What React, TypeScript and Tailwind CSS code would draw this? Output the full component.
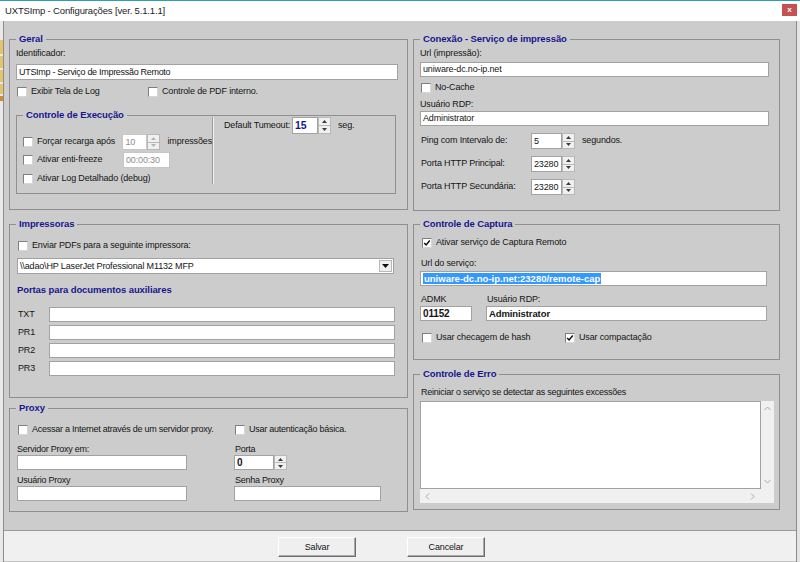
import React from 'react';

// Caixa de seleção no estilo clássico do Windows
const Box = ({ checked = false }: { checked?: boolean }) => (
  <span className="w-[10px] h-[10px] shrink-0 bg-white border border-t-[#7f7f7f] border-l-[#7f7f7f] border-r-[#d6d6d6] border-b-[#d6d6d6] flex items-center justify-center">
    {checked && (
      <svg width="8" height="8" viewBox="0 0 8 8">
        <path d="M1.2 4 L3.1 6 L6.8 1.6" stroke="#111" strokeWidth="1.5" fill="none" />
      </svg>
    )}
  </span>
);

const Check = ({ label, checked, className = '' }: { label: string; checked?: boolean; className?: string }) => (
  <div className={`flex items-center h-[13px] ${className}`}>
    <Box checked={checked} />
    <span className="ml-[4px] whitespace-nowrap leading-none">{label}</span>
  </div>
);

const Field = ({
  value = '',
  className = '',
  textClass = '',
  border = 'border-[#a2a2a2]',
}: {
  value?: React.ReactNode;
  className?: string;
  textClass?: string;
  border?: string;
}) => (
  <div className={`bg-white border ${border} flex items-center pl-[2px] overflow-hidden whitespace-nowrap leading-none shrink-0 ${className}`}>
    <span className={textClass}>{value}</span>
  </div>
);

const Tri = ({ up = false, color }: { up?: boolean; color: string }) => (
  <svg width="5" height="3" viewBox="0 0 5 3">
    <path d={up ? 'M0 3 L2.5 0 L5 3 Z' : 'M0 0 L5 0 L2.5 3 Z'} fill={color} />
  </svg>
);

const Spin = ({
  value,
  inputClass,
  textClass = '',
  className = '',
  disabled = false,
}: {
  value: string;
  inputClass: string;
  textClass?: string;
  className?: string;
  disabled?: boolean;
}) => (
  <div className={`flex shrink-0 ${className}`}>
    <Field
      value={value}
      className={`h-full ${inputClass}`}
      textClass={textClass}
      border={disabled ? 'border-[#c6c6c6]' : 'border-[#a2a2a2]'}
    />
    <div className="w-[13px] h-full flex flex-col">
      <div className="flex-1 bg-[#f0f0f0] border border-[#b8b8b8] flex items-center justify-center">
        <Tri up color={disabled ? '#b4b4b4' : '#3a3a3a'} />
      </div>
      <div className="flex-1 bg-[#f0f0f0] border border-t-0 border-[#b8b8b8] flex items-center justify-center">
        <Tri color={disabled ? '#b4b4b4' : '#3a3a3a'} />
      </div>
    </div>
  </div>
);

const Group = ({ title, className = '', children }: { title: string; className?: string; children?: React.ReactNode }) => (
  <fieldset className={`border border-[#8f8f8f] px-[6px] min-w-0 flex flex-col shrink-0 ${className}`}>
    <legend className="px-[3px] text-[9.5px] font-bold leading-[12px] text-[#16168e] tracking-[-0.1px]">{title}</legend>
    {children}
  </fieldset>
);

const Label = ({ children, className = '' }: { children: React.ReactNode; className?: string }) => (
  <div className={`h-[12px] leading-[12px] whitespace-nowrap ${className}`}>{children}</div>
);

const SpinRow = ({ label, value, suffix, className = '' }: { label: string; value: string; suffix?: string; className?: string }) => (
  <div className={`flex items-center h-[16px] ${className}`}>
    <span className="ml-[1px] w-[110px] whitespace-nowrap">{label}</span>
    <Spin value={value} inputClass="w-[31px]" className="h-[16px]" />
    {suffix && <span className="ml-[7px]">{suffix}</span>}
  </div>
);

const Chevron = ({ d }: { d: string }) => (
  <svg width="7" height="7" viewBox="0 0 7 7">
    <path d={d} stroke="#a9a9a9" strokeWidth="1" fill="none" />
  </svg>
);

const Btn = ({ children }: { children: React.ReactNode }) => (
  <button className="w-[78px] h-[20px] bg-[#efefef] border border-t-white border-l-white border-r-[#6d6d6d] border-b-[#6d6d6d] shadow-[inset_-1px_-1px_0_#a9a9a9] flex items-center justify-center leading-none">
    {children}
  </button>
);

export default function App() {
  return (
    <div className="w-[800px] h-[562px] bg-white flex flex-col overflow-hidden font-['Liberation_Sans',Arial,sans-serif] text-[9px] text-[#151515] tracking-[-0.15px]">
      {/* Barra de título */}
      <div className="h-[21px] shrink-0 border-t border-[#2e9fae] bg-white flex items-center justify-between pl-[5px] pr-[3px]">
        <span className="text-[9.5px] tracking-[-0.15px] text-[#222]">UXTSImp - Configurações [ver. 5.1.1.1]</span>
        <div className="w-[15px] h-[12px] -mt-[2px] bg-[#c75050] flex items-center justify-center text-white text-[8px] font-bold leading-none">x</div>
      </div>

      <div className="flex flex-1">
        {/* janela de fundo */}
        <div className="w-[3px] bg-[#e9e9e9] flex flex-col pt-[19px] gap-[2px]">
          <div className="h-[14px] bg-[#e6c46c]" />
          <div className="h-[12px] bg-[#e6c46c]" />
          <div className="h-[12px] bg-[#e6c46c]" />
          <div className="h-[10px] bg-[#e6c46c]" />
          <div className="h-[5px] bg-[#d08a3c]" />
        </div>

        <div className="flex-1 flex flex-col border-l border-r border-[#8c8c8c]">
          <div className="h-[510px] bg-[#cccccc] border-b border-[#9a9a9a] flex gap-[5px] pl-[5px] pt-[12px]">
            {/* Coluna esquerda */}
            <div className="w-[399px] flex flex-col">
              <Group title="Geral" className="h-[177px]">
                <Label className="mt-[2px]">Identificador:</Label>
                <Field value="UTSImp - Serviço de Impressão Remoto" className="mt-[5px] h-[16px] w-[382px]" textClass="tracking-[-0.3px]" />
                <div className="mt-[5px] flex">
                  <Check label="Exibir Tela de Log" className="ml-[1px] w-[131px]" />
                  <Check label="Controle de PDF interno." />
                </div>
                <Group title="Controle de Execução" className="mt-[11px] h-[85px] w-[380px]">
                  <div className="flex flex-1">
                    <div className="w-[189px] shrink-0 flex flex-col">
                      <div className="mt-[13px] flex items-center h-[16px]">
                        <Box />
                        <span className="ml-[4px] w-[86px] whitespace-nowrap">Forçar recarga após</span>
                        <Spin value="10" inputClass="w-[25px] bg-[#fafafa]" textClass="text-[#8d8d8d]" className="h-[16px]" disabled />
                        <span className="ml-[7px] whitespace-nowrap">impressões</span>
                      </div>
                      <div className="mt-[2px] flex items-center h-[16px]">
                        <Box />
                        <span className="ml-[4px] w-[86px] whitespace-nowrap">Ativar enti-freeze</span>
                        <Field value="00:00:30" className="w-[47px] h-[16px]" textClass="text-[#8d8d8d]" border="border-[#c6c6c6]" />
                      </div>
                      <div className="mt-[3px] flex items-center h-[16px]">
                        <Box />
                        <span className="ml-[4px] whitespace-nowrap">Ativar Log Detalhado (debug)</span>
                      </div>
                    </div>
                    <div className="w-px bg-[#9a9a9a] -mt-[4px] mb-[3px]" />
                    <div className="w-px bg-[#f2f2f2] -mt-[4px] mb-[3px]" />
                    <div className="flex flex-col pl-[10px]">
                      <div className="-mt-[4px] flex items-center h-[17px]">
                        <span className="w-[68px] whitespace-nowrap">Default Tumeout:</span>
                        <Spin value="15" inputClass="w-[26px]" textClass="font-bold text-[10.5px] text-[#16168e]" className="h-[17px]" />
                        <span className="ml-[7px]">seg.</span>
                      </div>
                    </div>
                  </div>
                </Group>
              </Group>

              <Group title="Impressoras" className="mt-[8px] h-[180px]">
                <Check label="Enviar PDFs para a seguinte impressora:" className="mt-[9px] ml-[2px]" />
                <div className="mt-[6px] ml-[1px] w-[377px] h-[16px] bg-white border border-[#a2a2a2] flex items-center justify-between">
                  <span className="pl-[2px] whitespace-nowrap leading-none">{'\\\\adao\\HP LaserJet Professional M1132 MFP'}</span>
                  <div className="w-[13px] h-[12px] mr-[1px] bg-[#f0f0f0] border border-[#b8b8b8] flex items-center justify-center">
                    <svg width="7" height="4" viewBox="0 0 7 4">
                      <path d="M0 0 L7 0 L3.5 4 Z" fill="#111" />
                    </svg>
                  </div>
                </div>
                <div className="mt-[10px] ml-[1px] h-[12px] leading-[12px] font-bold text-[9.5px] text-[#16168e] tracking-[-0.1px]">
                  Portas para documentos auxiliares
                </div>
                <div className="mt-[11px] flex flex-col gap-[3px]">
                  {['TXT', 'PR1', 'PR2', 'PR3'].map((l) => (
                    <div key={l} className="flex items-center h-[15px]">
                      <span className="ml-[2px] w-[31px]">{l}</span>
                      <Field className="h-[15px] w-[346px]" />
                    </div>
                  ))}
                </div>
              </Group>

              <Group title="Proxy" className="mt-[4px] h-[110px]">
                <div className="grid grid-cols-[218px_1fr] tracking-[-0.25px]">
                  <Check label="Acessar a Internet através de um servidor proxy." className="mt-[9px] ml-[2px]" />
                  <Check label="Usar autenticação básica." className="mt-[9px] ml-[1px]" />
                  <Label className="mt-[7px] ml-[1px]">Servidor Proxy em:</Label>
                  <Label className="mt-[7px] ml-[1px]">Porta</Label>
                  <Field className="ml-[1px] w-[170px] h-[15px]" />
                  <Spin value="0" inputClass="w-[40px]" textClass="font-bold text-[10px]" className="h-[15px]" />
                  <Label className="mt-[4px] ml-[1px]">Usuário Proxy</Label>
                  <Label className="mt-[4px] ml-[1px]">Senha Proxy</Label>
                  <Field className="ml-[1px] w-[170px] h-[15px]" />
                  <Field className="w-[147px] h-[15px]" />
                </div>
              </Group>
            </div>

            {/* Coluna direita */}
            <div className="w-[367px] flex flex-col">
              <Group title="Conexão - Serviço de impressão" className="h-[178px]">
                <Label className="mt-[2px]">Url (impressão):</Label>
                <Field value="uniware-dc.no-ip.net" className="mt-[3px] h-[15px] w-[349px]" />
                <Check label="No-Cache" className="mt-[4px] ml-[1px]" />
                <Label className="mt-[4px]">Usuário RDP:</Label>
                <Field value="Administrator" className="mt-[1px] h-[15px] w-[349px]" />
                <SpinRow label="Ping com Intervalo de:" value="5" suffix="segundos." className="mt-[7px]" />
                <SpinRow label="Porta HTTP Principal:" value="23280" className="mt-[7px]" />
                <SpinRow label="Porta HTTP Secundária:" value="23280" className="mt-[7px]" />
              </Group>

              <Group title="Controle de Captura" className="mt-[7px] h-[142px]">
                <Check label="Ativar serviço de Captura Remoto" checked className="mt-[6px] ml-[2px]" />
                <Label className="mt-[8px] ml-[1px]">Url do serviço:</Label>
                <Field
                  value={<span className="bg-[#3399ff] text-white font-bold text-[9.5px] px-[1px] tracking-[0px]">uniware-dc.no-ip.net:23280/remote-cap</span>}
                  className="mt-[2px] h-[15px] w-[347px]"
                />
                <div className="mt-[7px] flex h-[12px] leading-[12px]">
                  <span className="ml-[1px] w-[66px]">ADMK</span>
                  <span>Usuário RDP:</span>
                </div>
                <div className="mt-[1px] flex">
                  <Field value="01152" className="w-[52px] h-[15px]" textClass="font-bold text-[10px]" />
                  <Field value="Administrator" className="ml-[14px] w-[281px] h-[15px]" textClass="font-bold text-[9.5px] tracking-[-0.1px]" />
                </div>
                <div className="mt-[10px] flex">
                  <Check label="Usar checagem de hash" className="ml-[2px] w-[143px]" />
                  <Check label="Usar compactação" checked />
                </div>
              </Group>

              <Group title="Controle de Erro" className="mt-[8px] h-[142px]">
                <Label className="mt-[6px] ml-[1px] tracking-[-0.25px]">Reiniciar o serviço se detectar as seguintes excessões</Label>
                <div className="mt-[3px] w-[354px] h-[102px] flex flex-col bg-[#f0f0f0]">
                  <div className="flex h-[88px]">
                    <div className="w-[341px] h-full bg-white border border-[#a2a2a2]" />
                    <div className="flex-1 flex flex-col justify-between items-center py-[4px]">
                      <Chevron d="M0.5 5 L3.5 2 L6.5 5" />
                      <Chevron d="M0.5 2 L3.5 5 L6.5 2" />
                    </div>
                  </div>
                  <div className="flex-1 flex justify-between items-center px-[4px] pr-[18px]">
                    <Chevron d="M5 0.5 L2 3.5 L5 6.5" />
                    <Chevron d="M2 0.5 L5 3.5 L2 6.5" />
                  </div>
                </div>
              </Group>
            </div>
          </div>

          {/* Botões */}
          <div className="flex-1 bg-[#f0f0f0] border-b border-[#c2c2c2] flex items-start pt-[6px] pl-[274px] gap-[51px]">
            <Btn>Salvar</Btn>
            <Btn>Cancelar</Btn>
          </div>
        </div>

        <div className="w-[3px] bg-[#e4e4e4]" />
      </div>
    </div>
  );
}
